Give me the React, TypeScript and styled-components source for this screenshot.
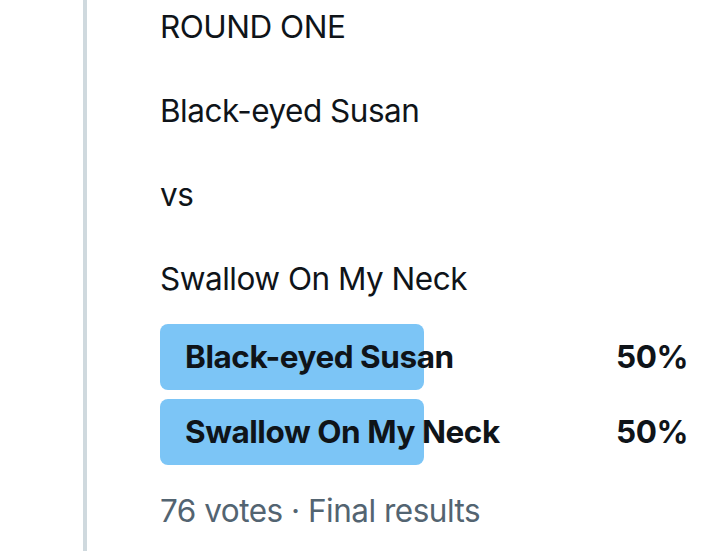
import React from "react";
import styled, { createGlobalStyle } from "styled-components";

const GlobalStyle = createGlobalStyle`
    html, body {
        margin: 0;
        padding: 0;
        background: #ffffff;
    }
    body {
        font-family: "Inter", "Roboto", "Liberation Sans", sans-serif;
        color: #0f1419;
    }
`;

const Page = styled.div`
    display: flex;
    flex-direction: row;
    width: 720px;
    height: 551px;
    overflow: hidden;
`;

const Gutter = styled.div`
    width: 160px;
    flex-shrink: 0;
    display: flex;
    justify-content: flex-start;
    padding-left: 83px;
    box-sizing: border-box;
`;

const ThreadLine = styled.div`
    width: 4px;
    height: 100%;
    background: #cfd9de;
`;

const Body = styled.div`
    width: 528px;
    padding-top: 6px;
    display: flex;
    flex-direction: column;
    font-size: 31.5px;
    line-height: 42px;
    letter-spacing: -0.5px;
`;

const TweetText = styled.div`
    white-space: pre-wrap;
    font-weight: 400;
`;

const Poll = styled.div`
    margin-top: 24px;
    display: flex;
    flex-direction: column;
    gap: 9px;
`;

const Option = styled.div`
    position: relative;
    height: 66px;
    display: flex;
    align-items: center;
    justify-content: space-between;
    font-weight: 700;
    letter-spacing: -0.45px;
`;

const Fill = styled.div`
    position: absolute;
    left: 0;
    top: 0;
    bottom: 0;
    background: #7cc5f6;
    border-radius: 8px;
`;

const Label = styled.span`
    position: relative;
    padding-left: 25px;
`;

const Percent = styled.span`
    position: relative;
`;

const Footer = styled.div`
    margin-top: 25px;
    color: #536471;
`;

const options = [
    { label: "Black-eyed Susan", pct: 50 },
    { label: "Swallow On My Neck", pct: 50 },
];

export default function App() {
    return (
        <Page>
            <GlobalStyle />
            <Gutter>
                <ThreadLine />
            </Gutter>
            <Body>
                <TweetText>{"ROUND ONE\n\nBlack-eyed Susan\n\nvs\n\nSwallow On My Neck"}</TweetText>
                <Poll>
                    {options.map(o => (
                        <Option key={o.label}>
                            <Fill style={{ width: `${o.pct}%` }} />
                            <Label>{o.label}</Label>
                            <Percent>{o.pct}%</Percent>
                        </Option>
                    ))}
                </Poll>
                <Footer>76 votes · Final results</Footer>
            </Body>
        </Page>
    );
}
